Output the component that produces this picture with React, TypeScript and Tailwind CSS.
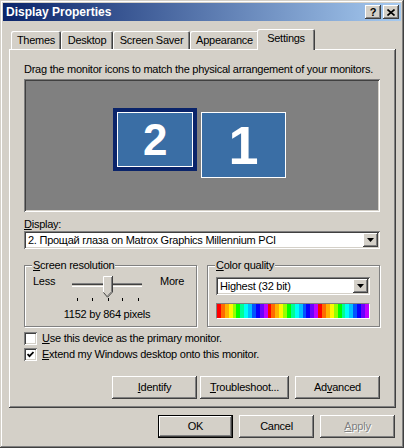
import type { ReactNode } from "react";

const raised =
  "shadow-[inset_-1px_-1px_0_#404040,inset_1px_1px_0_#ffffff,inset_-2px_-2px_0_#808080,inset_2px_2px_0_#d4d0c8]";
const sunken =
  "shadow-[inset_1px_1px_0_#808080,inset_-1px_-1px_0_#ffffff,inset_2px_2px_0_#404040,inset_-2px_-2px_0_#d4d0c8]";

const tabs = [
  { id: 1, title: "Themes", w: "w-[50px]" },
  { id: 2, title: "Desktop", w: "w-[52px]" },
  { id: 3, title: "Screen Saver", w: "w-[77px]" },
  { id: 4, title: "Appearance", w: "w-[69px]" },
];

// one hue cycle of the colour-depth strip, repeated three times
const hues = [0, 25, 42, 58, 85, 120, 155, 178, 195, 220, 242, 265, 285];
const bands = [...hues, ...hues, ...hues];

const Button = ({ children, className = "", isDefault = false }: { children: ReactNode; className?: string; isDefault?: boolean }) => (
  <div className={`flex items-center justify-center bg-[#d4d0c8] ${isDefault ? "border border-black" : ""} ${className}`}>
    <div className={`flex h-full w-full items-center justify-center ${raised}`}>{children}</div>
  </div>
);

const DropArrow = () => (
  <div className={`flex h-full w-[15px] items-center justify-center bg-[#d4d0c8] ${raised}`}>
    <svg width="7" height="4" viewBox="0 0 7 4">
      <polygon points="0,0 7,0 3.5,4" fill="#000" />
    </svg>
  </div>
);

const Combo = ({ value, className = "" }: { value: string; className?: string }) => (
  <div className={`flex bg-white p-[2px] ${sunken} ${className}`}>
    <div className="flex flex-1 items-center overflow-hidden whitespace-nowrap pl-[2px]">{value}</div>
    <DropArrow />
  </div>
);

const CheckBox = ({ checked, children }: { checked?: boolean; children: ReactNode }) => (
  <div className="flex h-[13px] items-center gap-[5px]">
    <div className={`flex h-[13px] w-[13px] items-center justify-center bg-white ${sunken}`}>
      {checked && (
        <svg width="7" height="7" viewBox="0 0 7 7">
          <polyline points="0.5,3 2.5,5.2 6.5,1" fill="none" stroke="#000" strokeWidth="1.8" />
        </svg>
      )}
    </div>
    <span>{children}</span>
  </div>
);

const GroupBox = ({ label, children, className = "" }: { label: ReactNode; children: ReactNode; className?: string }) => (
  <div className={`relative h-[62px] border border-[#808080] shadow-[1px_1px_0_#ffffff,inset_1px_1px_0_#ffffff] ${className}`}>
    <span className="absolute -top-[7px] left-[7px] bg-[#d4d0c8] px-[1px] leading-[13px]">{label}</span>
    {children}
  </div>
);

const Slider = () => (
  <svg width="80" height="28" viewBox="0 0 80 28">
    <rect x="5" y="9" width="70" height="1" fill="#808080" />
    <rect x="5" y="10" width="70" height="1" fill="#404040" />
    <rect x="5" y="11" width="70" height="1" fill="#d4d0c8" />
    <rect x="5" y="12" width="70" height="1" fill="#ffffff" />
    <polygon points="36,2 45,2 45,18 40.5,23 36,18" fill="#d4d0c8" />
    <polyline points="36.5,18 36.5,2.5 45,2.5" fill="none" stroke="#ffffff" />
    <polyline points="45.5,2 45.5,18 40.5,23.2 36.5,18.5" fill="none" stroke="#404040" />
    <polyline points="44.5,3 44.5,17.6 40.5,21.8" fill="none" stroke="#808080" />
    {[10, 25, 41, 55, 71].map((x) => (
      <rect key={x} x={x} y="24" width="1" height="3" fill="#000" />
    ))}
  </svg>
);

const App = () => {
  return (
    <div className="h-[448px] w-[404px] overflow-hidden bg-[#d4d0c8] font-['Liberation_Sans',Arial,sans-serif] text-[11px] leading-[13px] tracking-[-0.25px] text-black">
      <div className="flex h-full w-full flex-col px-[3px] pt-[3px] shadow-[inset_-1px_-1px_0_#404040,inset_1px_1px_0_#d4d0c8,inset_-2px_-2px_0_#808080,inset_2px_2px_0_#ffffff]">
        {/* caption */}
        <div className="flex h-[18px] items-center bg-[linear-gradient(to_right,#0a246a,#a6caf0)] pl-[3px] pr-[2px]">
          <span className="flex-1 text-[12px] font-bold tracking-normal text-white">Display Properties</span>
          <div className={`flex h-[14px] w-[16px] items-center justify-center bg-[#d4d0c8] ${raised}`}>
            <span className="text-[11px] font-bold leading-none">?</span>
          </div>
          <div className={`ml-[2px] flex h-[14px] w-[16px] items-center justify-center bg-[#d4d0c8] ${raised}`}>
            <svg width="8" height="7" viewBox="0 0 8 7">
              <path d="M0.5 0.5 L7.5 6.5 M7.5 0.5 L0.5 6.5" stroke="#000" strokeWidth="1.6" />
            </svg>
          </div>
        </div>

        {/* tab strip */}
        <div className="mt-[8px] flex h-[20px] items-end pl-[8px]">
          {tabs.map((tab) => (
            <div
              key={tab.id}
              className={`flex h-[18px] items-center justify-center rounded-t-[2px] shadow-[inset_1px_1px_0_#ffffff,inset_-1px_0_0_#404040,inset_-2px_0_0_#808080] ${tab.w}`}
            >
              {tab.title}
            </div>
          ))}
          <div className="relative z-10 -mb-[1px] -ml-[2px] flex h-[21px] w-[58px] items-center justify-center rounded-t-[2px] bg-[#d4d0c8] pb-[3px] shadow-[inset_1px_1px_0_#ffffff,inset_-1px_0_0_#404040,inset_-2px_0_0_#808080]">
            Settings
          </div>
        </div>

        {/* settings page */}
        <div className="ml-[6px] flex h-[359px] w-[387px] flex-col pl-[15px] pr-[16px] pt-[14px] shadow-[inset_-1px_-1px_0_#404040,inset_1px_1px_0_#ffffff,inset_-2px_-2px_0_#808080]">
          <p className="whitespace-nowrap">Drag the monitor icons to match the physical arrangement of your monitors.</p>

          <div className={`relative mt-[3px] h-[133px] w-full bg-[#808080] ${sunken}`}>
            <div className="absolute left-[89px] top-[29px] h-[63px] w-[84px] bg-[#0a246a] p-[4px]">
              <div className="flex h-full w-full items-center justify-center border border-white bg-[#3a6ea5] font-bold text-white">
                <span className="text-[44px] leading-none">2</span>
              </div>
            </div>
            <div className="absolute left-[177px] top-[33px] flex h-[66px] w-[85px] items-center justify-center border border-white bg-[#3a6ea5] font-bold text-white">
              <span className="text-[54px] leading-none">1</span>
            </div>
          </div>

          <p className="mt-[6px]">
            <u>D</u>isplay:
          </p>
          <Combo className="h-[18px] w-full" value="2. Прощай глаза on Matrox Graphics Millennium PCI" />

          <div className="mt-[16px] flex gap-[10px]">
            <GroupBox className="w-[173px]" label={<><u>S</u>creen resolution</>}>
              <div className="flex pl-[8px] pt-[8px]">
                <span className="mt-[1px] w-[34px]">Less</span>
                <Slider />
                <span className="ml-[13px] mt-[1px]">More</span>
              </div>
              <div className="ml-[42px] mt-[6px] flex w-[80px] justify-center whitespace-nowrap">1152 by 864 pixels</div>
            </GroupBox>
            <GroupBox className="w-[173px]" label={<><u>C</u>olor quality</>}>
              <div className="flex flex-col pl-[8px] pt-[11px]">
                <Combo className="h-[18px] w-[154px]" value="Highest (32 bit)" />
                <div className="mt-[8px] flex h-[16px] w-[154px] border border-b-white border-l-[#808080] border-r-white border-t-[#808080]">
                  {bands.map((h, i) => (
                    <div key={i} className="h-full flex-1" style={{ backgroundColor: `hsl(${h}, 100%, 50%)` }} />
                  ))}
                </div>
              </div>
            </GroupBox>
          </div>

          <div className="mt-[5px] flex flex-col gap-[3px]">
            <CheckBox>
              <u>U</u>se this device as the primary monitor.
            </CheckBox>
            <CheckBox checked>
              <u>E</u>xtend my Windows desktop onto this monitor.
            </CheckBox>
          </div>

          <div className="mt-[15px] flex justify-end">
            <Button className="h-[23px] w-[85px]">
              <span>
                <u>I</u>dentify
              </span>
            </Button>
            <Button className="ml-[3px] h-[23px] w-[89px]">
              <span>
                <u>T</u>roubleshoot...
              </span>
            </Button>
            <Button className="ml-[6px] h-[23px] w-[85px]">
              <span>
                Ad<u>v</u>anced
              </span>
            </Button>
          </div>
        </div>

        {/* dialog buttons */}
        <div className="mt-[7px] flex justify-end gap-[6px] pr-[6px]">
          <Button isDefault className="h-[23px] w-[75px]">
            OK
          </Button>
          <Button className="h-[23px] w-[75px]">Cancel</Button>
          <Button className="h-[23px] w-[75px]">
            <span className="text-[#808080] [text-shadow:1px_1px_0_#ffffff]">
              <u>A</u>pply
            </span>
          </Button>
        </div>
      </div>
    </div>
  );
};

export default App;
